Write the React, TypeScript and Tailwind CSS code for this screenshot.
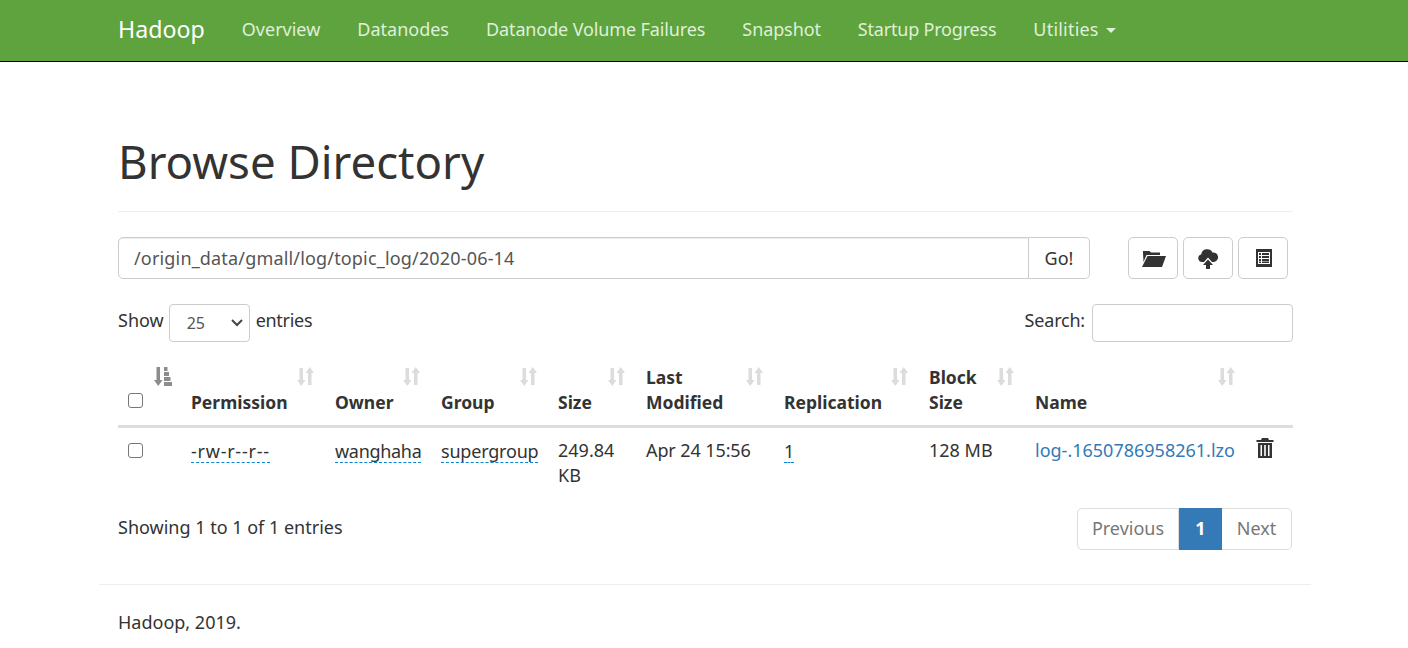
import React from "react";

const SortIcon = ({ active = false }: { active?: boolean }) =>
  active ? (
    <svg width="18" height="19" viewBox="0 0 18 19" className="text-[#8c8c8c]" fill="currentColor">
      <path d="M2.500 0h3.500v13h2.500L4.250 19 0 13h2.500z" />
      <path d="M10 0h3.500v4H10zM10 5h5v4H10zM10 10h6.500v4H10zM10 15h8v4h-8z" />
    </svg>
  ) : (
    <svg width="17" height="19" viewBox="0 0 17 19" className="text-[#dcdcdc]" fill="currentColor">
      <path d="M2.500 1h3.500v12h2.500L4.250 19 0 13h2.500z" />
      <path d="M12.750 0L17 6h-2.500v12H11V6H8.500z" />
    </svg>
  );

const Dashed = ({ children, className = "" }: { children: React.ReactNode; className?: string }) => (
  <td className="align-top px-[10px] pt-[11px] pb-[10px] leading-[25px]">
    <span className={"inline-block leading-[22px] border-b border-dashed border-[#0a84d0] " + className}>{children}</span>
  </td>
);

const Th = ({ children, className = "", iconClass = "right-[11px]" }: { children?: React.ReactNode; className?: string; iconClass?: string }) => (
  <th className={"relative align-bottom px-[10px] pt-[10px] pb-[10px] text-left font-bold text-[17.5px] leading-[25px] " + className}>
    {children}
    <span className={"absolute top-[12px] " + iconClass}><SortIcon /></span>
  </th>
);

const Td = ({ children, className = "" }: { children?: React.ReactNode; className?: string }) => (
  <td className={"align-top px-[10px] pt-[10px] pb-[11px] leading-[25px] " + className}>{children}</td>
);

const IconBtn = ({ children }: { children: React.ReactNode }) => (
  <button className="w-[50px] h-[42px] border border-[#cccccc] rounded-[5px] bg-white flex items-center justify-center text-[#333]">{children}</button>
);

const Box = () => <span className="block w-[15px] h-[15px] border border-[#767676] rounded-[3px] bg-white" />;

export default function App() {
  return (
    <div className="bg-white w-[1408px] h-[648px] overflow-hidden text-[#333333] text-[18px] leading-[25px]" style={{ fontFamily: '"Noto Sans", "Open Sans", sans-serif' }}>
      <nav className="h-[62px] bg-[#5fa33e] border-b border-[#000] pl-[118px] pb-[2px] flex items-center text-[#dff0d8]">
        <span className="text-white text-[23.200px] mr-[37px]">Hadoop</span>
        <div className="flex gap-[37px]">
          <span>Overview</span>
          <span>Datanodes</span>
          <span className="tracking-[-0.12px]">Datanode Volume Failures</span>
          <span className="tracking-[-0.1px]">Snapshot</span>
          <span className="tracking-[-0.2px]">Startup Progress</span>
          <span className="flex items-center tracking-[0.2px]">Utilities<span className="ml-[7px] mt-[2px] w-0 h-0 border-x-[5px] border-x-transparent border-t-[5px] border-t-[#dff0d8]" /></span>
        </div>
      </nav>

      <main className="ml-[99px] w-[1212px] pl-[19px] pr-[18px]">
        <div className="mt-[69px] pb-[20px] border-b border-[#eeeeee]">
          <h1 className="text-[45.600px] leading-[60px] text-[#333]">Browse Directory</h1>
        </div>

        <div className="mt-[25px] flex items-center w-[1170px] justify-between">
          <div className="flex w-[972px] h-[42px]">
            <div className="flex-1 border border-[#cccccc] rounded-l-[5px] px-[15px] flex items-center text-[#555] tracking-[0.17px] shadow-[inset_0_1px_1px_rgba(0,0,0,0.075)]">/origin_data/gmall/log/topic_log/2020-06-14</div>
            <div className="w-[61px] border border-l-0 border-[#cccccc] rounded-r-[5px] flex items-center justify-center">Go!</div>
          </div>
          <div className="flex gap-[5px]">
            <IconBtn>
              <svg className="ml-[2px]" width="24" height="17" viewBox="0 0 24 17" fill="currentColor"><path d="M1 3V1h6.500L9 2.500h9V5H4.500L1.500 12z" /><path d="M5.500 6h18.500L20 17H0z" /></svg>
            </IconBtn>
            <IconBtn>
              <svg width="20" height="21" viewBox="0 0 20 21" fill="currentColor"><path d="M4 14a3.800 3.800 0 0 1-.8-7.500A6 6 0 0 1 14.500 4.500 4.800 4.800 0 0 1 16 14h-2L10 9.500 6 14z" /><path d="M10 11.500l5 5.500h-3v4H8v-4H5z" /></svg>
            </IconBtn>
            <IconBtn>
              <svg className="ml-[2px]" width="18" height="18" viewBox="0 0 18 18" fill="currentColor"><path fillRule="evenodd" d="M1 0h16v18H1zM3 3v12h12V3z" /><path d="M4 4h2v2H4zM7 4h7v2H7zM4 7h2v2H4zM7 7h7v2H7zM4 10h2v2H4zM7 10h7v2H7zM4 12.500h2v1.500H4zM7 12.500h7v1.500H7z" /></svg>
            </IconBtn>
          </div>
        </div>

        <div className="mt-[25px] flex justify-between items-center h-[38px]">
          <div className="flex items-center">
            <span className="mb-[6px] mr-[5px]">Show</span>
            <div className="w-[81px] h-[38px] border border-[#cccccc] rounded-[4px] flex items-center justify-between pl-[17px] pr-[6px] text-[16px] text-[#555]">
              <span>25</span>
              <svg width="12" height="8" viewBox="0 0 12 8" fill="none" stroke="#444" strokeWidth="2"><path d="M1 1l5 5 5-5" /></svg>
            </div>
            <span className="mb-[6px] ml-[6px] tracking-[-0.3px]">entries</span>
          </div>
          <div className="flex items-center gap-[7px]">
            <span className="mb-[6px] tracking-[-0.2px]">Search:</span>
            <div className="w-[201px] h-[38px] border border-[#cccccc] rounded-[4px]" />
          </div>
        </div>

        <table className="mt-[13px] w-[1175px] table-fixed border-collapse">
          <colgroup>
            <col className="w-[63px]" /><col className="w-[144px]" /><col className="w-[106px]" /><col className="w-[117px]" /><col className="w-[88px]" /><col className="w-[138px]" /><col className="w-[145px]" /><col className="w-[106px]" /><col className="w-[220px]" /><col className="w-[48px]" />
          </colgroup>
          <thead>
            <tr className="border-b-[3px] border-[#dddddd]">
              <th className="relative align-bottom pl-[10px] pb-[17px] text-left">
                <Box />
                <span className="absolute top-[12px] right-[9px]"><SortIcon active /></span>
              </th>
              <Th>Permission</Th>
              <Th>Owner</Th>
              <Th>Group</Th>
              <Th>Size</Th>
              <Th>Last<br />Modified</Th>
              <Th>Replication</Th>
              <Th>Block<br />Size</Th>
              <Th iconClass="right-[10px]">Name</Th>
              <th />
            </tr>
          </thead>
          <tbody>
            <tr>
              <td className="align-top pl-[10px] pt-[15px]"><Box /></td>
              <Dashed className="tracking-[0.75px]">-rw-r--r--</Dashed>
              <Dashed className="tracking-[-0.3px]">wanghaha</Dashed>
              <Dashed className="tracking-[-0.2px]">supergroup</Dashed>
              <Td>249.84<br />KB</Td>
              <Td className="tracking-[-0.1px]">Apr 24 15:56</Td>
              <Dashed>1</Dashed>
              <Td>128 MB</Td>
              <Td className="text-[#337ab7] whitespace-nowrap">log-.1650786958261.lzo</Td>
              <td className="align-top pl-[11px] pt-[10px]">
                <svg width="18" height="20" viewBox="0 0 18 20" fill="#333"><path d="M6 0h6l1 2h4.500v2H.5V2H5z" /><path fillRule="evenodd" d="M2 5h14v15H2zM4.500 7v11h1.500V7zM8.200 7v11h1.600V7zM12 7v11h1.500V7z" /></svg>
              </td>
            </tr>
          </tbody>
        </table>

        <div className="flex justify-between items-start mt-[9px] w-[1174px]">
          <div className="pt-[7px]">Showing 1 to 1 of 1 entries</div>
          <div className="flex h-[42px] text-[#777]">
            <div className="w-[102px] border border-[#dddddd] rounded-l-[5px] flex items-center justify-center pb-[2px]">Previous</div>
            <div className="w-[43px] bg-[#337ab7] text-white font-bold flex items-center justify-center pb-[2px]">1</div>
            <div className="w-[70px] border border-l-0 border-[#dddddd] rounded-r-[5px] flex items-center justify-center pb-[2px]">Next</div>
          </div>
        </div>
      </main>

      <footer className="ml-[99px] w-[1212px] mt-[34px] border-t border-[#eeeeee] px-[19px] pt-[25px]">Hadoop, 2019.</footer>
    </div>
  );
}
